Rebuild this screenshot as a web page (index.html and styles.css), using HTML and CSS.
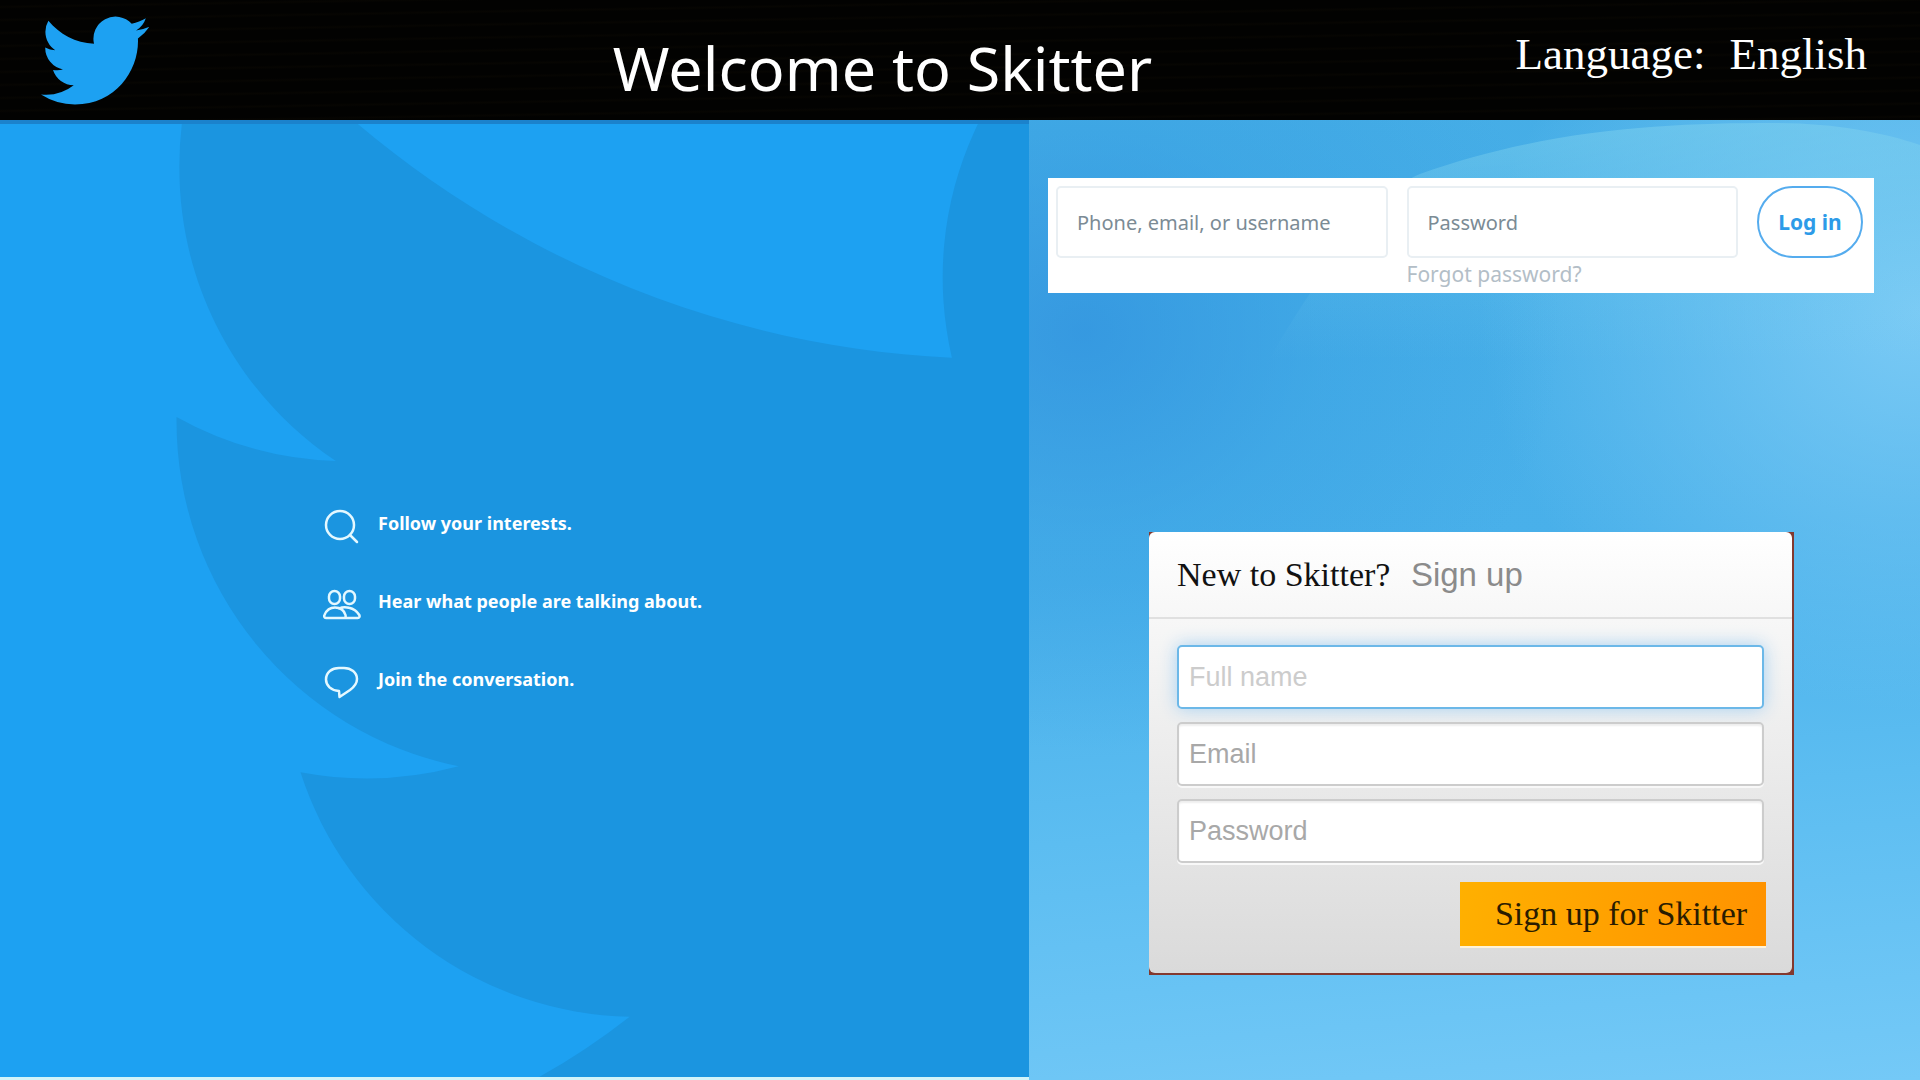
FILE: index.html
```html
<!DOCTYPE html>
<html lang="en">
<head>
  <meta charset="utf-8">
  <meta name="viewport" content="width=device-width, initial-scale=1">
  <title>Welcome to Skitter</title>
  <link rel="stylesheet" href="styles.css">
</head>
<body>
  <header class="topbar">
    <a class="logo" href="#" aria-label="Skitter home">
      <svg viewBox="0 2.2 24 19.6" aria-hidden="true"><path id="bird" fill="currentColor" d="M23.953 4.57a10 10 0 01-2.825.775 4.958 4.958 0 002.163-2.723c-.951.555-2.005.959-3.127 1.184a4.92 4.92 0 00-8.384 4.482C7.69 8.095 4.067 6.13 1.64 3.162a4.822 4.822 0 00-.666 2.475c0 1.71.87 3.213 2.188 4.096a4.904 4.904 0 01-2.228-.616v.06a4.923 4.923 0 003.946 4.827 4.996 4.996 0 01-2.212.085 4.936 4.936 0 004.604 3.417 9.867 9.867 0 01-6.102 2.105c-.39 0-.779-.023-1.17-.067a13.995 13.995 0 007.557 2.209c9.053 0 13.998-7.496 13.998-13.985 0-.21 0-.42-.015-.63A9.935 9.935 0 0024 4.59z"/></svg>
    </a>
    <h1 class="title">Welcome to Skitter</h1>
    <div class="language">
      <span id="language-label">Language:</span>
      <button class="language-choice" type="button" aria-describedby="language-label">English</button>
    </div>
  </header>

  <main class="content">
    <section class="intro">
      <svg class="intro-bird" viewBox="-1.535 5.02 14.41 13.33" preserveAspectRatio="xMinYMin slice" aria-hidden="true"><use href="#bird"/></svg>
      <ul class="reasons">
        <li class="reason">
          <svg class="reason-icon" viewBox="0 0 38 36" aria-hidden="true"><circle cx="17" cy="17" r="14"/><path d="M27 27l7 7"/></svg>
          <span>Follow your interests.</span>
        </li>
        <li class="reason">
          <svg class="reason-icon" viewBox="0 0 38 36" aria-hidden="true"><rect x="6" y="5" width="11" height="13" rx="5.500"/><rect x="21" y="5" width="11" height="13" rx="5.500"/><path d="M3 32c-2 0-2-2-1.500-3C3.500 24 7 21.500 12 21.500S21 24 22.500 29c.4 1.500 0 3-1.500 3zM16 22.500c3-1.500 7-1.500 10-.8 5 1 8 3.500 10.300 7.300.6 1.500.2 3-1.600 3H21"/></svg>
          <span>Hear what people are talking about.</span>
        </li>
        <li class="reason">
          <svg class="reason-icon" viewBox="0 0 38 36" aria-hidden="true"><path d="M16 27C8 26.500 3 21.500 3 15.500 3 8 9 4 16 4h5c7 0 13 4.500 13 11 0 5-3 8-7 11l-10.500 7z"/></svg>
          <span>Join the conversation.</span>
        </li>
      </ul>
    </section>

    <section class="access">
      <svg class="glow" viewBox="0 0 891 240" preserveAspectRatio="none" aria-hidden="true">
        <defs><linearGradient id="glow-fade" x1="0" y1="0" x2="0" y2="1"><stop offset="0" stop-color="#7fd2ee" stop-opacity=".5"/><stop offset=".4" stop-color="#7fd2ee" stop-opacity=".25"/><stop offset="1" stop-color="#7fd2ee" stop-opacity="0"/></linearGradient></defs>
        <path fill="url(#glow-fade)" d="M240 240C290 150 360 65 391 54 520 8 640 3 746 3c60 0 110 10 145 22v215z"/>
      </svg>
      <form class="login">
        <input class="login-field" type="text" placeholder="Phone, email, or username" aria-label="Phone, email, or username">
        <input class="login-field" type="password" placeholder="Password" aria-label="Password">
        <button class="login-button" type="submit">Log in</button>
        <a class="forgot" href="#">Forgot password?</a>
      </form>

      <form class="signup">
        <h2 class="signup-head">New to Skitter? <span class="signup-hint">Sign up</span></h2>
        <div class="signup-body">
          <input class="signup-field signup-field-active" type="text" placeholder="Full name" aria-label="Full name">
          <input class="signup-field" type="email" placeholder="Email" aria-label="Email">
          <input class="signup-field" type="password" placeholder="Password" aria-label="Password">
          <button class="signup-button" type="submit">Sign up for Skitter</button>
        </div>
      </form>
    </section>
  </main>
</body>
</html>
```
FILE: styles.css
```css
* {
  box-sizing: border-box;
}

body {
  margin: 0;
  min-height: 100vh;
  display: flex;
  flex-direction: column;
  font-family: "Noto Sans", "Open Sans", sans-serif;
  background: #4fb3ec;
}

input,
button {
  font-family: inherit;
  margin: 0;
}

.topbar {
  display: grid;
  grid-template-columns: 30% 1fr auto;
  column-gap: 24px;
  min-height: 120px;
  padding: 0 53px 0 41px;
  color: #fff;
  background:
    repeating-linear-gradient(179deg, transparent 0 5px, rgba(40, 30, 10, 0.12) 7px, transparent 9px 13px),
    #020201;
}

.logo {
  width: 108px;
  height: 89px;
  margin-top: 16px;
  color: #1da1f2;
}

.logo svg {
  display: block;
  width: 100%;
  height: 100%;
}

.title {
  margin: 24px 0 0;
  font-size: 61px;
  line-height: 88px;
  font-weight: 400;
  white-space: nowrap;
}

.language {
  display: flex;
  align-items: flex-start;
  gap: 24px;
  padding-top: 28px;
  font-family: "Liberation Serif", serif;
  font-size: 45px;
  line-height: 52px;
}

.language-choice {
  padding: 0;
  border: 0;
  background: none;
  color: inherit;
  font: inherit;
}

.content {
  flex: 1;
  display: grid;
  grid-template-columns: 1029fr 891fr;
}

.intro {
  position: relative;
  overflow: hidden;
  padding: 384px 32px 32px 323px;
  background: #1da1f2;
  border-top: 4px solid #1b82cc;
  border-bottom: 3px solid #d2f4fa;
}

.intro-bird {
  position: absolute;
  inset: 0;
  width: 100%;
  height: 100%;
  color: #1b95e0;
}

.reasons {
  position: relative;
  display: grid;
  gap: 42px;
  margin: 0;
  padding: 0;
  list-style: none;
  color: #fff;
  font-size: 18px;
  font-weight: 700;
}

.reason {
  display: flex;
  gap: 17px;
  line-height: 30px;
}

.reason-icon {
  width: 38px;
  height: 36px;
  fill: none;
  stroke: #e4f8ff;
  stroke-width: 2.5;
  stroke-linecap: round;
  stroke-linejoin: round;
}

.access {
  position: relative;
  padding: 58px 46px 32px 19px;
  background:
    radial-gradient(ellipse 480px 420px at 6% 22%, rgba(48, 146, 222, 0.75) 0%, rgba(50, 155, 225, 0.35) 50%, transparent 100%),
    radial-gradient(ellipse 440px 400px at 100% 20%, #7acaf5 0%, transparent 100%),
    linear-gradient(175deg, #45ade6 0%, #49b0ea 45%, #5cbdf1 70%, #74c9f7 100%);
}

.glow {
  position: absolute;
  top: 0;
  left: 0;
  width: 100%;
  height: 240px;
}

.login {
  position: relative;
  display: grid;
  grid-template-columns: 1fr 1fr 106px;
  column-gap: 19px;
  padding: 8px 11px 3px 8px;
  background: #fff;
}

.login-field {
  min-width: 0;
  height: 72px;
  padding: 0 19px;
  border: 2px solid #e9eff3;
  border-radius: 5px;
  background: #fff;
  font-size: 20px;
}

.login-field::placeholder {
  color: #7b8b95;
  opacity: 1;
}

.login-button {
  height: 72px;
  padding: 0;
  border: 2px solid #55acee;
  border-radius: 36px;
  background: #fff;
  color: #2d9be8;
  font-size: 21px;
  font-weight: 700;
}

.forgot {
  grid-column: 2;
  color: #b3bec7;
  font-size: 21px;
  line-height: 32px;
  text-decoration: none;
}

.signup {
  max-width: 645px;
  margin: 239px 0 0 101px;
  border-right: 2px solid #83392f;
  border-bottom: 2px solid #83392f;
  background: #83392f;
}

.signup-head {
  margin: 0;
  padding: 0 28px;
  border-bottom: 2px solid #e0e0e0;
  border-radius: 6px 6px 0 0;
  background: linear-gradient(#fff, #f7f7f7);
  color: #111;
  font-family: "Liberation Serif", serif;
  font-size: 34px;
  font-weight: 400;
  line-height: 85px;
}

.signup-hint {
  margin-left: 12px;
  color: #8b8b8b;
  font-family: "Liberation Sans", sans-serif;
  font-size: 33px;
}

.signup-body {
  display: grid;
  gap: 13px;
  padding: 26px 28px 27px;
  border-radius: 0 0 6px 6px;
  background: linear-gradient(#f7f7f7, #dadada);
}

.signup-field {
  width: 100%;
  height: 64px;
  padding: 0 10px;
  border: 2px solid #ccc;
  border-radius: 5px;
  background: #fff;
  box-shadow: 0 2px 0 #f8f8f8, inset 0 2px 2px #eee;
  font-family: "Liberation Sans", sans-serif;
  font-size: 27px;
}

.signup-field::placeholder {
  color: #a8a8a8;
  opacity: 1;
}

.signup-field-active {
  border-color: #6cb8e8;
  box-shadow: 0 0 18px #a5d0f2;
}

.signup-field-active::placeholder {
  color: #ccc;
}

.signup-button {
  justify-self: end;
  width: 306px;
  height: 64px;
  margin-top: 6px;
  margin-right: -2px;
  padding: 0 16px 0 32px;
  border: 0;
  background: linear-gradient(100deg, #ffb000, #ff9200);
  box-shadow: 0 2px 0 #fff3d8;
  color: #2a1c00;
  font-family: "Liberation Serif", serif;
  font-size: 34px;
  white-space: nowrap;
}

@media (max-width: 1500px) {
  .content {
    grid-template-columns: 1fr;
  }

  .intro {
    padding: 96px 32px;
  }

  .signup {
    margin: 64px auto 0;
  }
}
```
